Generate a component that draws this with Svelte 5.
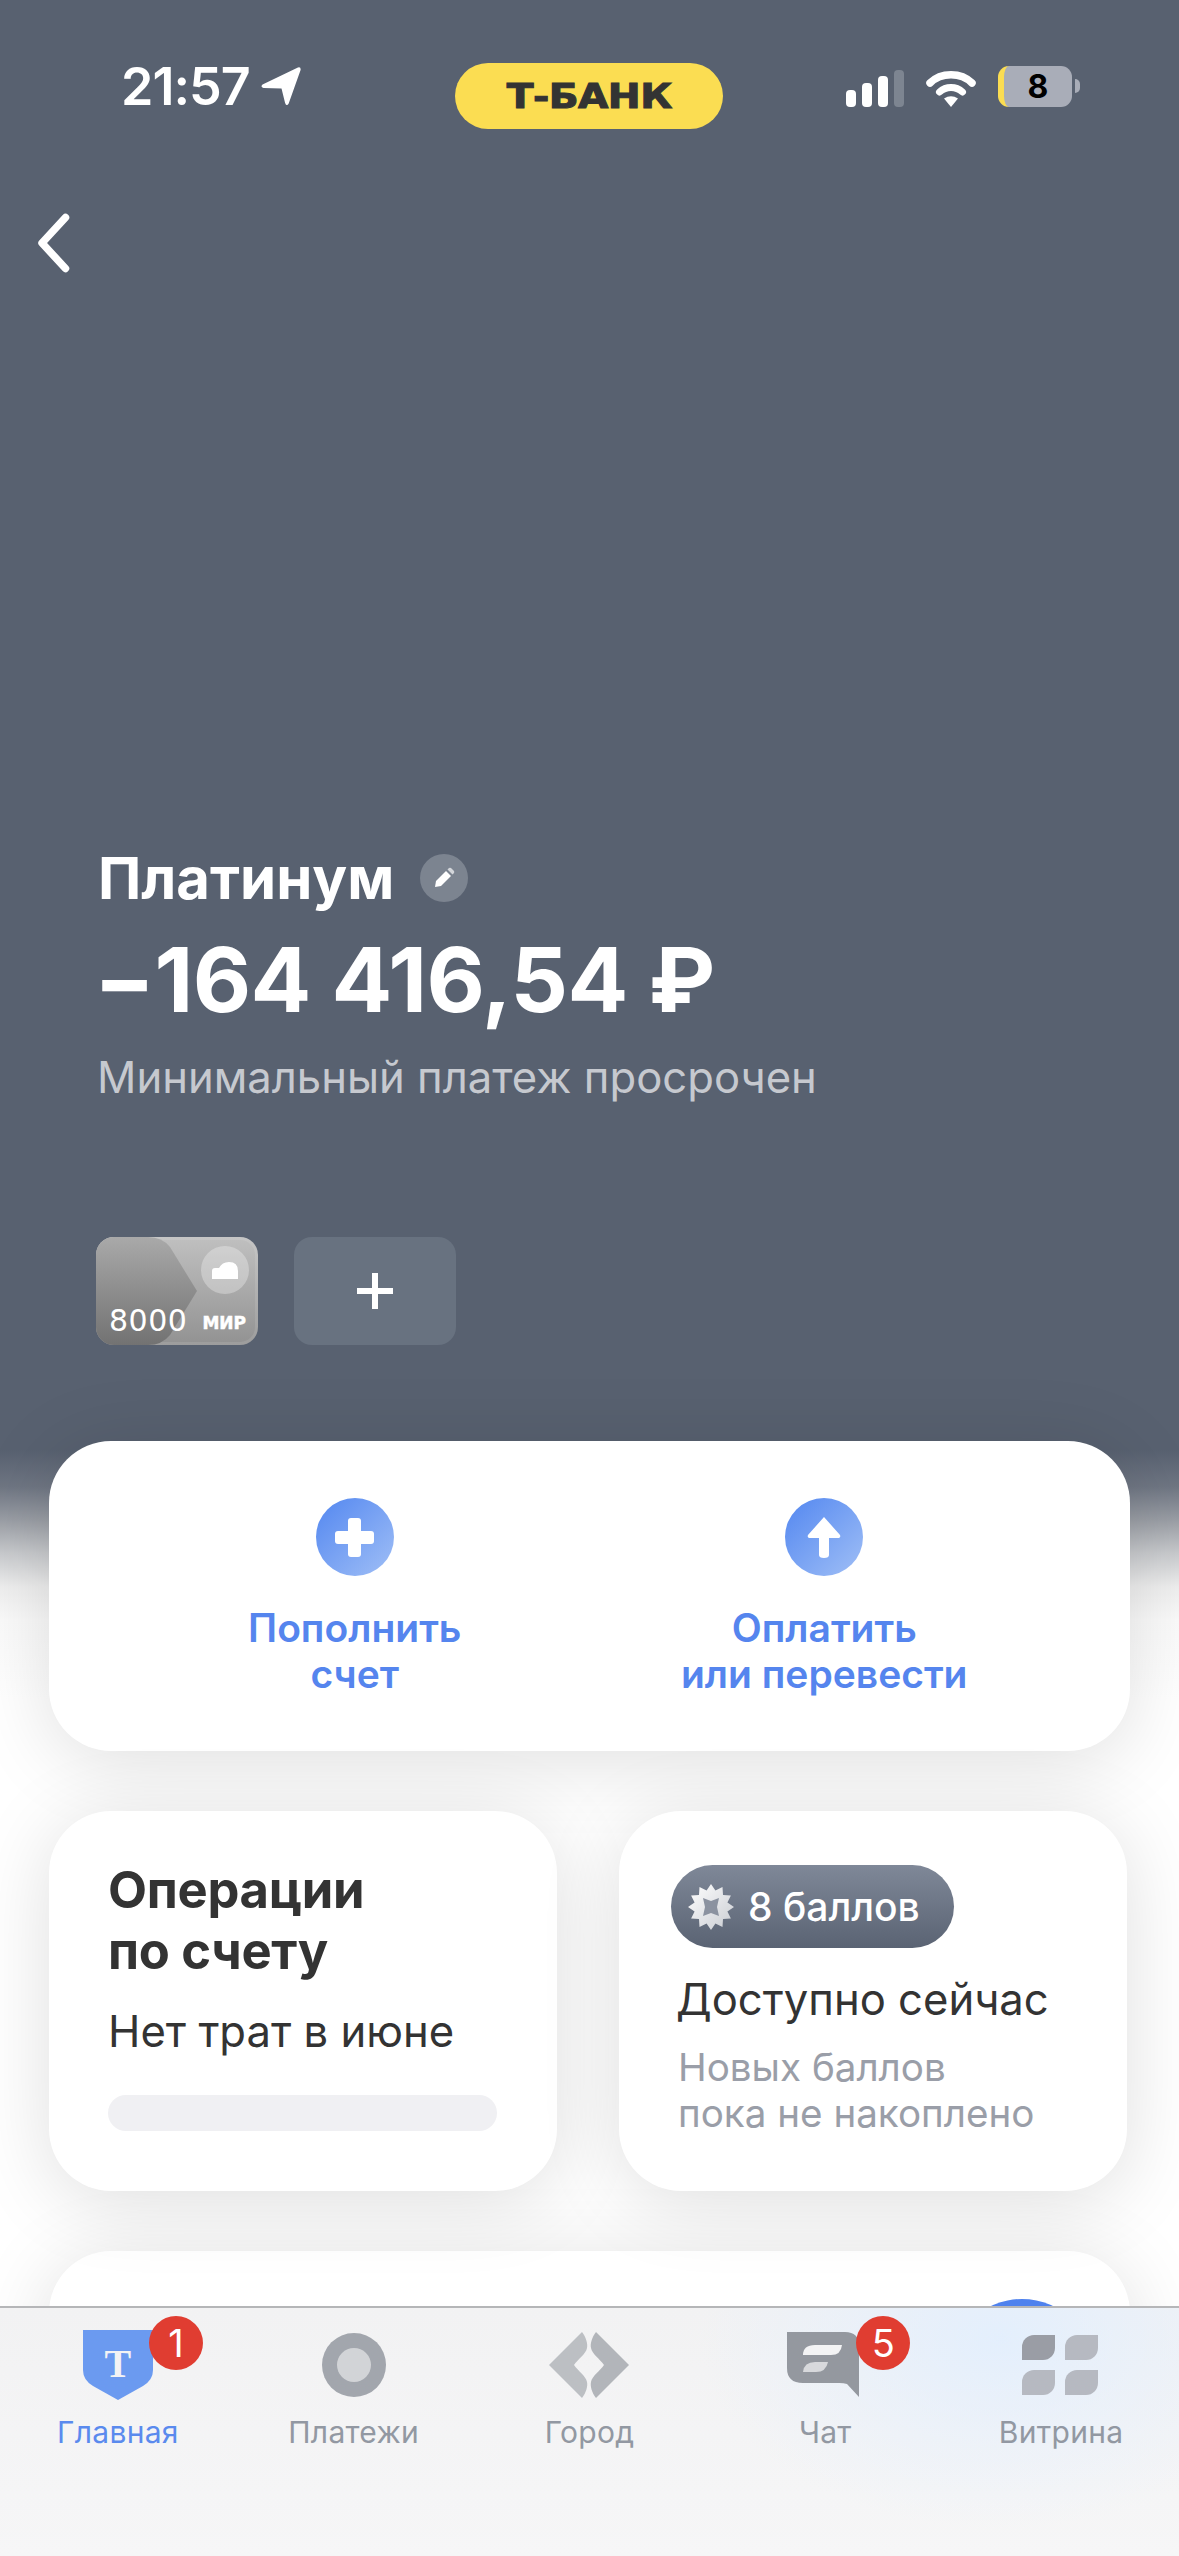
<script>
	const starPoints = Array.from({ length: 24 }, (_, i) => {
		const r = i % 2 ? 17 : 23;
		const a = (i * Math.PI) / 12;
		return `${(23 + r * Math.sin(a)).toFixed(1)},${(23 - r * Math.cos(a)).toFixed(1)}`;
	}).join(' ');
</script>

<div class="phone">
	<div class="status">
		<div class="clock">
			<span>21:57</span>
			<svg width="40" height="39" viewBox="0 0 39 38"><path d="M36 0.5 Q39 -0.5 38.6 3 L27 35.5 Q25 39 23.5 35 L20 21 L2.5 20.5 Q-1 19.5 1.5 17 Z" fill="#fff" /></svg>
		</div>
		<div class="brand"><span>Т-БАНК</span></div>
		<div class="indicators">
			<div class="signal">
				<i style="height: 17px"></i>
				<i style="height: 24px"></i>
				<i style="height: 31px"></i>
				<i class="off" style="height: 37px"></i>
			</div>
			<svg width="50" height="38" viewBox="0 0 50 38" fill="none">
				<path d="M4 14 C15 3 35 3 46 14" stroke="#fff" stroke-width="7.5" stroke-linecap="round" />
				<path d="M13.5 23 C20 17 30 17 36.5 23" stroke="#fff" stroke-width="7" stroke-linecap="round" />
				<path d="M18 29.5 Q25 25 32 29.5 L25 38 Z" fill="#fff" />
			</svg>
			<div class="battery">
				<div class="cell"><b>8</b></div>
				<div class="tip"></div>
			</div>
		</div>
	</div>

	<svg class="back" width="33" height="60" viewBox="0 0 33 60" fill="none">
		<path d="M28.5 4.5 L5 30 L28.5 55.5" stroke="#fff" stroke-width="7.5" stroke-linecap="round" stroke-linejoin="round" />
	</svg>

	<div class="hero">
		<div class="title">
			<span>Платинум</span>
			<div class="edit">
				<svg width="24" height="24" viewBox="0 0 24 24"><path d="M3 21 L4 15 L14 5 L19 10 L9 20 Z" fill="#fff" /><path d="M15.5 3.5 L17 2 Q18 1.5 19 2 L22 5 Q22.5 6 22 7 L20.5 8.5 Z" fill="#d3d6da" /></svg>
			</div>
		</div>
		<div class="amount">−164 416,54 ₽</div>
		<div class="note">Минимальный платеж просрочен</div>
	</div>

	<div class="thumbs">
		<div class="thumb">
			<div class="cloud">
				<svg width="26" height="17" viewBox="0 0 26 17"><path d="M0 17 V9 Q0 6 3 6 H7 Q10 0 17 0 Q26 0 26 9 V17 Z" fill="#fff" /></svg>
			</div>
			<span class="num">8000</span>
			<span class="mir">МИР</span>
		</div>
		<div class="add">
			<svg width="36" height="36" viewBox="0 0 36 36"><path d="M15 0 H21 V15 H36 V21 H21 V36 H15 V21 H0 V15 H15 Z" fill="#fff" /></svg>
		</div>
	</div>

	<div class="card actions">
		<div class="action">
			<div class="round">
				<svg width="39" height="39" viewBox="0 0 39 39">
					<rect x="13" y="0" width="13" height="39" rx="3" fill="#fff" />
					<rect x="0" y="13" width="39" height="13" rx="3" fill="#fff" />
				</svg>
			</div>
			<div class="action-text">Пополнить<br />счет</div>
		</div>
		<div class="action">
			<div class="round">
				<svg width="34" height="41" viewBox="0 0 34 41"><path d="M17 0 L33 18 Q34 20 32 21 L22 21 V38 Q22 41 17 41 Q12 41 12 38 V21 L2 21 Q0 20 1 18 Z" fill="#fff" /></svg>
			</div>
			<div class="action-text">Оплатить<br />или перевести</div>
		</div>
	</div>

	<div class="pair">
		<div class="card ops">
			<div class="ops-title">Операции<br />по счету</div>
			<div class="plain">Нет трат в июне</div>
			<div class="bar"></div>
		</div>
		<div class="card points">
			<div class="pill">
				<svg width="46" height="46" viewBox="0 0 46 46">
					<defs>
						<linearGradient id="starFill" x1="0" y1="0" x2="1" y2="1">
							<stop offset="0" stop-color="#fff" />
							<stop offset="1" stop-color="#c9ccd2" />
						</linearGradient>
					</defs>
					<polygon points={starPoints} fill="url(#starFill)" />
					<path d="M15 14 L23 17 L31 14 L29 23 L31 32 L23 29 L15 32 L17 23 Z" fill="#8b92a0" />
				</svg>
				<span>8 баллов</span>
			</div>
			<div class="plain avail">Доступно сейчас</div>
			<div class="muted">Новых баллов<br />пока не накоплено</div>
		</div>
	</div>

	<div class="card third">
		<div class="peek"></div>
	</div>

	<nav class="tabbar">
		<div class="tab active">
			<div class="tab-icon">
				<svg width="70" height="70" viewBox="0 0 70 70">
					<path d="M0 0 H70 V40 Q70 50 60 56 L35 70 L10 56 Q0 50 0 40 Z" fill="#6b9af0" />
					<text x="35" y="47" class="shield-t">Т</text>
				</svg>
				<div class="badge">1</div>
			</div>
			<span>Главная</span>
		</div>
		<div class="tab">
			<div class="tab-icon">
				<svg width="64" height="64" viewBox="0 0 64 64">
					<circle cx="32" cy="32" r="32" fill="#a2a6ad" />
					<circle cx="32" cy="32" r="17" fill="#d2d4d7" />
				</svg>
			</div>
			<span>Платежи</span>
		</div>
		<div class="tab">
			<div class="tab-icon">
				<svg width="80" height="66" viewBox="0 0 80 66">
					<path d="M33 0 L0 33 L33 66 C37 61 39 54 38 50 C37 44 29 39 25 33 C29 27 37 22 38 16 C39 12 37 5 33 0 Z" fill="#bcbfc3" />
					<path d="M47 0 L80 33 L47 66 C43 61 41 54 42 50 C43 44 51 39 55 33 C51 27 43 22 42 16 C41 12 43 5 47 0 Z" fill="#b2b5ba" />
				</svg>
			</div>
			<span>Город</span>
		</div>
		<div class="tab">
			<div class="tab-icon">
				<svg class="chat" width="72" height="66" viewBox="0 0 72 66">
					<path d="M0 0 H58 Q72 0 72 14 V65 L60 52 Q57 51 52 51 H16 Q0 51 0 36 Z" fill="#94989f" />
					<path d="M16 23 Q16 13 28 13 H55 Q54 23 44 23 Z" fill="#f3f3f4" />
					<path d="M16 40 Q17 30 28 30 H41 Q39 40 29 40 Z" fill="#d8d9dc" />
				</svg>
				<div class="badge">5</div>
			</div>
			<span>Чат</span>
		</div>
		<div class="tab">
			<div class="tab-icon">
				<div class="tiles">
					<i class="dark"></i>
					<i></i>
					<i></i>
					<i></i>
				</div>
			</div>
			<span>Витрина</span>
		</div>
	</nav>
</div>

<style>
	:global(body) {
		margin: 0;
		background: #fff;
	}

	.phone {
		position: relative;
		width: 1179px;
		height: 2556px;
		overflow: hidden;
		font-family: Inter, 'Noto Sans', sans-serif;
		color: #333;
		background: linear-gradient(
			to bottom,
			#586170 0,
			#586170 1450px,
			#6f7683 1487px,
			#9a9ea5 1520px,
			#c8cacd 1553px,
			#eeeeee 1587px,
			#fafafa 1620px,
			#fff 1700px
		);
	}

	.status {
		display: flex;
		align-items: center;
		height: 66px;
		padding-top: 63px;
	}

	.clock {
		display: flex;
		align-items: center;
		gap: 11px;
		width: 334px;
		padding-left: 121px;
		margin-bottom: 20px;
		color: #fff;
		font-size: 52px;
		font-weight: 600;
		letter-spacing: -1px;
	}

	.brand {
		display: flex;
		align-items: center;
		justify-content: center;
		width: 268px;
		height: 66px;
		border-radius: 33px;
		background: #fbdd52;
	}

	.brand span {
		display: block;
		font-family: 'DejaVu Sans', sans-serif;
		font-size: 33px;
		font-weight: 700;
		line-height: 1;
		color: #333;
		transform: scaleX(1.19);
		letter-spacing: -0.5px;
		-webkit-text-stroke: 1px #333;
	}

	.indicators {
		display: flex;
		align-items: flex-end;
		gap: 22px;
		padding-left: 123px;
		margin-bottom: 20px;
	}

	.signal {
		display: flex;
		align-items: flex-end;
		gap: 6px;
		height: 37px;
	}

	.signal i {
		display: block;
		width: 10px;
		border-radius: 4px;
		background: #fff;
	}

	.signal i.off {
		background: #7d8591;
	}

	.battery {
		display: flex;
		align-items: center;
		gap: 3px;
	}

	.cell {
		display: flex;
		align-items: center;
		justify-content: center;
		width: 74px;
		height: 41px;
		box-sizing: border-box;
		border-left: 6px solid #fbdd52;
		border-radius: 11px;
		background: #a9adb8;
		color: #000;
		font-size: 32px;
	}

	.tip {
		width: 5px;
		height: 14px;
		border-radius: 0 5px 5px 0;
		background: #a9adb8;
	}

	.back {
		display: block;
		margin: 84px 0 0 37px;
	}

	.hero {
		margin-top: 568px;
		padding-left: 98px;
		color: #fff;
	}

	.title {
		display: flex;
		align-items: center;
		gap: 26px;
		height: 74px;
		font-size: 58px;
		font-weight: 700;
		line-height: 74px;
	}

	.edit {
		display: flex;
		align-items: center;
		justify-content: center;
		width: 48px;
		height: 48px;
		border-radius: 50%;
		background: #7c8490;
	}

	.amount {
		margin: 11px 0 0 -4px;
		font-size: 90px;
		font-weight: 700;
		line-height: 108px;
		letter-spacing: -0.6px;
		white-space: nowrap;
	}

	.note {
		margin: 19px 0 0 -1px;
		font-size: 43.6px;
		line-height: 50px;
		color: #c6c9cf;
	}

	.thumbs {
		display: flex;
		gap: 36px;
		margin: 134px 0 0 96px;
	}

	.thumb,
	.add {
		width: 162px;
		height: 108px;
		border-radius: 18px;
	}

	.thumb {
		position: relative;
		display: flex;
		align-items: flex-end;
		justify-content: space-between;
		box-sizing: border-box;
		padding: 0 12px 9px 13px;
		overflow: hidden;
		color: #fff;
		background: linear-gradient(to bottom, #c0c0c0, #929292);
		box-shadow: inset 0 0 0 3px rgba(255, 255, 255, 0.1);
	}

	.thumb::before {
		content: '';
		position: absolute;
		inset: 0;
		background: linear-gradient(to bottom, #a9a9a9, #727272);
		clip-path: path('M0 0 H52 Q66 0 74 10 L101 54 L74 98 Q66 108 52 108 H0 Z');
	}

	.cloud {
		position: absolute;
		top: 9px;
		right: 9px;
		display: flex;
		align-items: center;
		justify-content: center;
		width: 48px;
		height: 48px;
		border-radius: 50%;
		background: rgba(255, 255, 255, 0.3);
	}

	.num {
		position: relative;
		font-family: 'DejaVu Sans', sans-serif;
		font-size: 30px;
		line-height: 30px;
		letter-spacing: 0.5px;
	}

	.mir {
		position: relative;
		margin-bottom: 3px;
		font-family: 'DejaVu Sans', sans-serif;
		font-size: 17px;
		font-weight: 700;
		line-height: 20px;
		-webkit-text-stroke: 0.5px #fff;
	}

	.add {
		display: flex;
		align-items: center;
		justify-content: center;
		background: #687280;
	}

	.card {
		border-radius: 62px;
		background: #fff;
		box-shadow: 0 10px 80px rgba(0, 0, 0, 0.13);
	}

	.actions {
		display: grid;
		grid-template-columns: 1fr 1fr;
		box-sizing: border-box;
		width: 1081px;
		height: 310px;
		margin: 96px 0 0 49px;
		padding: 57px 71px 0;
	}

	.action {
		display: flex;
		flex-direction: column;
		align-items: center;
	}

	.round {
		display: flex;
		align-items: center;
		justify-content: center;
		width: 78px;
		height: 78px;
		border-radius: 50%;
		background: linear-gradient(135deg, #5387f0, #a0bff6);
	}

	.action-text {
		margin-top: 29px;
		font-size: 39px;
		font-weight: 600;
		line-height: 46px;
		text-align: center;
		color: #5585ee;
	}

	.pair {
		display: flex;
		gap: 62px;
		margin: 60px 0 0 49px;
	}

	.pair .card {
		box-sizing: border-box;
		width: 508px;
		height: 380px;
		border-radius: 62px;
	}

	.ops {
		padding: 48px 0 0 59px;
	}

	.ops-title {
		font-size: 50.7px;
		font-weight: 700;
		line-height: 61px;
		letter-spacing: -0.3px;
	}

	.plain {
		margin-top: 26px;
		font-size: 43.6px;
		line-height: 50px;
		white-space: nowrap;
	}

	.bar {
		width: 389px;
		height: 36px;
		margin: 38px 0 0 0;
		border-radius: 18px;
		background: #f0f0f3;
	}

	.points {
		padding: 54px 0 0 52px;
	}

	.pill {
		display: flex;
		align-items: center;
		gap: 14px;
		box-sizing: border-box;
		width: 283px;
		height: 83px;
		padding-left: 17px;
		border-radius: 42px;
		background: linear-gradient(to bottom, #7f8898, #5a6373);
		color: #fff;
		font-size: 39px;
		font-weight: 500;
	}

	.avail {
		margin: 27px 0 0 5px;
	}

	.muted {
		margin: 19px 0 0 7px;
		font-size: 38.6px;
		line-height: 46px;
		color: #9a9ea8;
		white-space: nowrap;
	}

	.third {
		display: flex;
		justify-content: flex-end;
		box-sizing: border-box;
		width: 1081px;
		height: 300px;
		margin: 60px 0 0 49px;
		padding: 48px 34px 0 0;
	}

	.peek {
		width: 148px;
		height: 148px;
		border-radius: 50%;
		background: #4f82ee;
	}

	.tabbar {
		position: absolute;
		top: 2306px;
		left: 0;
		right: 0;
		bottom: 0;
		display: grid;
		grid-template-columns: repeat(5, 1fr);
		box-sizing: border-box;
		padding-top: 21px;
		border-top: 2px solid #b5b6b8;
		background:
			radial-gradient(ellipse 300px 190px at 1000px 30px, rgba(224, 238, 255, 0.8), rgba(224, 238, 255, 0)),
			linear-gradient(to bottom, #f2f2f3, #f6f6f7);
	}

	.tab {
		display: flex;
		flex-direction: column;
		align-items: center;
		font-size: 30px;
		line-height: 36px;
		letter-spacing: 0.3px;
		color: #9298a2;
	}

	.tab.active {
		color: #5a8aee;
	}

	.tab-icon {
		position: relative;
		display: flex;
		align-items: center;
		justify-content: center;
		width: 80px;
		height: 72px;
		margin-bottom: 13px;
	}

	.shield-t {
		font-family: 'Liberation Serif', serif;
		font-size: 40px;
		font-weight: 700;
		text-anchor: middle;
		fill: #f3f3f4;
	}

	.chat {
		margin-left: -5px;
	}

	.badge {
		position: absolute;
		top: -13px;
		left: 71px;
		width: 54px;
		height: 54px;
		border-radius: 50%;
		background: #e03d31;
		color: #fff;
		font-size: 38px;
		font-weight: 400;
		line-height: 54px;
		text-align: center;
		letter-spacing: 0;
	}

	.tiles {
		display: grid;
		grid-template-columns: 33px 33px;
		grid-auto-rows: 25px;
		gap: 10px;
		margin-left: -2px;
	}

	.tiles i {
		display: block;
		border-radius: 12px 0 12px 0;
		background: #b6b9c1;
	}

	.tiles i.dark {
		background: #9a9da5;
	}
</style>
